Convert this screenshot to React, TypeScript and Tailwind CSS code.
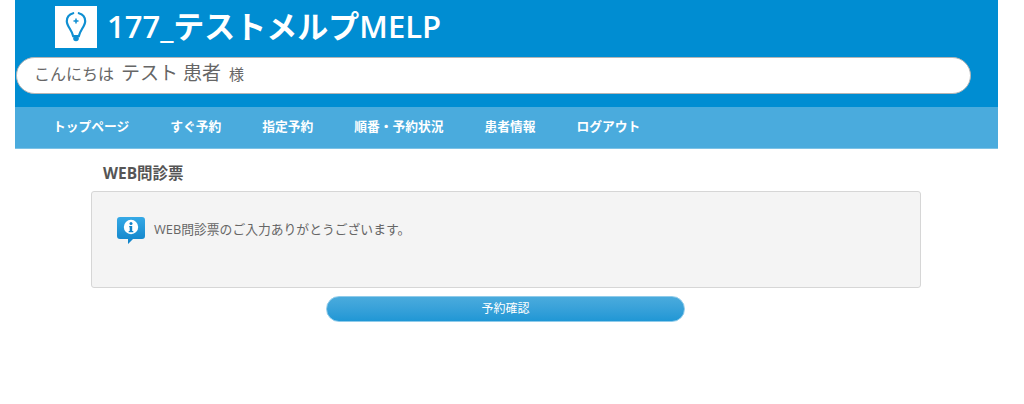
import React from 'react';

const navItems = ['トップページ', 'すぐ予約', '指定予約', '順番・予約状況', '患者情報', 'ログアウト'];

const font = "font-['Open_Sans','Noto_Sans_CJK_JP',sans-serif]";

const PinLogo = () => (
  <svg viewBox="0 0 42 42" className="w-[42px] h-[42px]" fill="none">
    <path
      d="M18.200 7.200C14.200 8.200 11.800 11.400 11.800 15.200c0 5 5.200 8.800 6.400 15h5.600c1.200-6.200 6.400-10 6.400-15 0-3.800-2.400-7-6.400-8"
      stroke="#0f8fd2"
      strokeWidth="2.200"
      strokeLinecap="round"
    />
    <path d="M21 12.500v5M18.500 15h5" stroke="#0f8fd2" strokeWidth="1.500" />
    <circle cx="21" cy="32.500" r="2.800" fill="#0f8fd2" />
  </svg>
);

const InfoBubble = () => (
  <svg viewBox="0 0 28 27" className="w-[28px] h-[27px]">
    <defs>
      <linearGradient id="bubble" x1="0" y1="0" x2="0" y2="1">
        <stop offset="0" stopColor="#35a9e6" />
        <stop offset="1" stopColor="#0f82c8" />
      </linearGradient>
    </defs>
    <path
      d="M3 0h22a3 3 0 0 1 3 3v16a3 3 0 0 1-3 3H16l-5 5v-5H3a3 3 0 0 1-3-3V3a3 3 0 0 1 3-3z"
      fill="url(#bubble)"
    />
    <circle cx="14" cy="10" r="7.200" fill="#fff" />
    <circle cx="14" cy="6.500" r="1.500" fill="#0f82c8" />
    <path d="M12.200 9h3v5H16.300v1.300h-4.600v-1.300h1v-3.700h-.5z" fill="#0f82c8" />
  </svg>
);

export default function App() {
  return (
    <div className={`w-[1024px] h-[404px] bg-white overflow-hidden pl-[15px] ${font}`}>
      <div className="w-[983px]">
        <header className="h-[107px] bg-[#008dd2] pt-[6px] pl-px">
          <div className="flex items-center gap-[10px] pl-[39px] h-[42px]">
            <div className="w-[42px] h-[42px] bg-white">
              <PinLogo />
            </div>
            <h1 className="-mt-[3px] text-[31px] leading-[42px] font-semibold text-white whitespace-nowrap">
              177_テストメルプMELP
            </h1>
          </div>
          <div className="mt-[9px] w-[955px] h-[37px] bg-white rounded-full border border-[#b5b5b5] flex items-baseline pl-[17px] text-[#666] leading-[31px]">
            <span className="text-[16px]">こんにちは</span>
            <span className="text-[19px] ml-[7px]">テスト 患者</span>
            <span className="text-[15px] ml-[8px]">様</span>
          </div>
        </header>
        <nav className="h-[42px] bg-[#4aabdd] border-b border-[#7cc2e6] flex items-center pl-[38px] gap-[41px]">
          {navItems.map((item) => (
            <a key={item} className="-mt-[2px] text-[12.750px] font-bold text-white whitespace-nowrap">
              {item}
            </a>
          ))}
        </nav>
        <main className="pl-[76px] pr-[77px]">
          <h2 className="mt-[14px] ml-[12px] text-[15.500px] leading-[20px] font-bold text-[#555]">
            WEB問診票
          </h2>
          <div className="mt-[8px] h-[97px] bg-[#f4f4f4] border border-[#d6d6d6] rounded-[3px] flex items-start pl-[25px] pt-[25px] gap-[9px]">
            <InfoBubble />
            <p className="-mt-px text-[12.800px] leading-[26px] text-[#666]">WEB問診票のご入力ありがとうございます。</p>
          </div>
          <div className="mt-[8px] flex justify-center">
            <button className="w-[359px] h-[26px] -ml-px rounded-full bg-gradient-to-b from-[#4aabdd] to-[#1f97d5] border border-[#8fcbea] text-[12px] text-white">
              予約確認
            </button>
          </div>
        </main>
      </div>
    </div>
  );
}
